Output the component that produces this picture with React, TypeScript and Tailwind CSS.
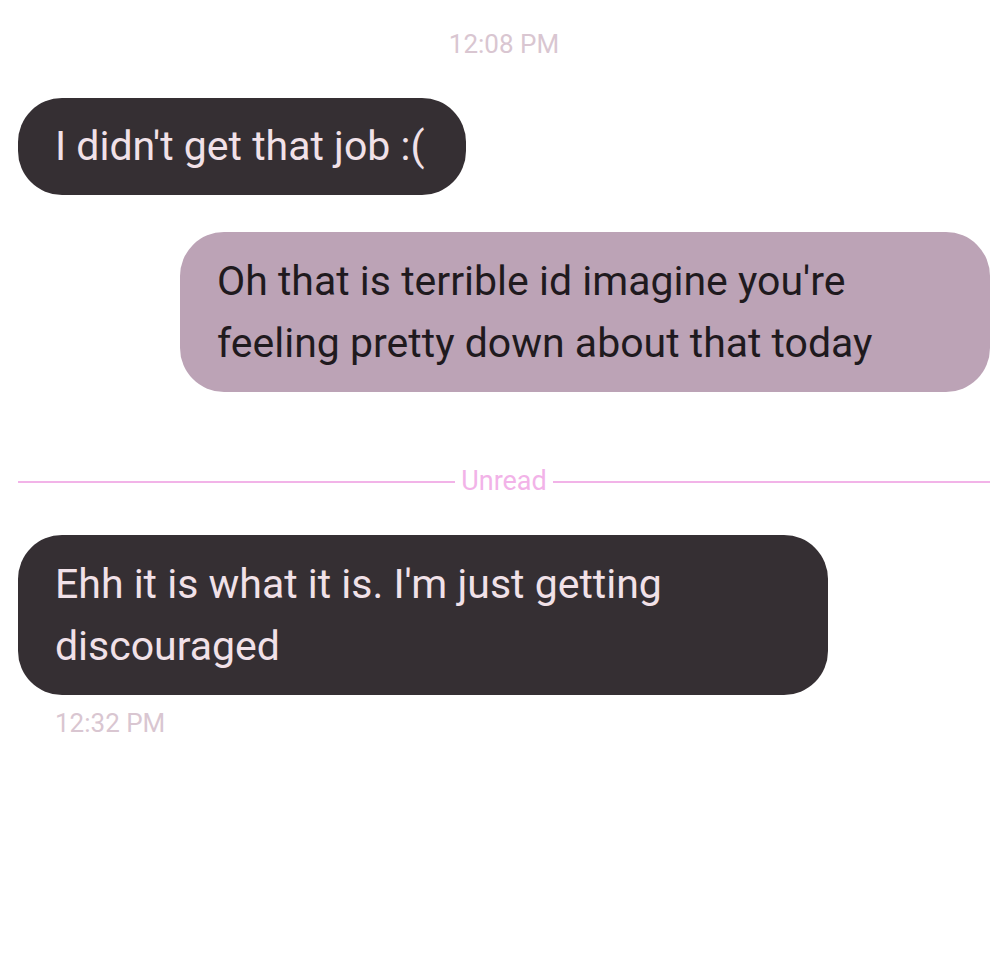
const Stamp = ({ children, className = "" }: { children: React.ReactNode; className?: string }) => (
  <div className={`text-[26px] leading-none text-[#d9c6d1] ${className}`}>{children}</div>
);

export default function App() {
  return (
    <div className="min-h-screen bg-white font-['Roboto',sans-serif] px-[18px] pt-[31px]">
      <Stamp className="text-center">12:08 PM</Stamp>

      {/* incoming */}
      <div className="mt-[41px] flex">
        <div className="rounded-[44px] bg-[#352f33] pl-[37px] pr-[42px] pt-[17px] pb-[18px] text-[41px] leading-[62px] text-[#f1e1e8]">
          I didn't get that job :(
        </div>
      </div>

      {/* outgoing */}
      <div className="mt-[37px] flex justify-end">
        <div className="w-[810px] rounded-[44px] bg-[#bca3b6] px-[37px] py-[18px] text-[41px] leading-[62px] text-[#1f1a1e]">
          Oh that is terrible id imagine you're feeling pretty down about that today
        </div>
      </div>

      {/* unread divider */}
      <div className="mt-[76px] flex items-center gap-[6px]">
        <div className="h-[2px] flex-1 bg-[#f2b3e8]" />
        <span className="text-[27px] leading-none text-[#f2b3e8]">Unread</span>
        <div className="h-[2px] flex-1 bg-[#f2b3e8]" />
      </div>

      <div className="mt-[40px] flex">
        <div className="w-[810px] rounded-[44px] bg-[#352f33] px-[37px] py-[18px] text-[41px] leading-[62px] text-[#f1e1e8]">
          Ehh it is what it is. I'm just getting discouraged
        </div>
      </div>
      <Stamp className="mt-[15px] pl-[37px]">12:32 PM</Stamp>
    </div>
  );
}
